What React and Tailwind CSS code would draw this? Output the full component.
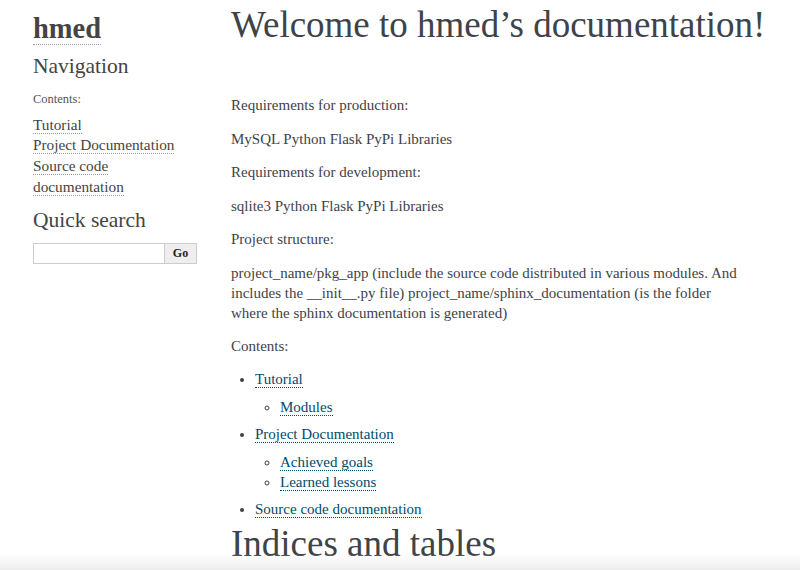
export default function App() {
  const serif = { fontFamily: '"Liberation Serif", Georgia, serif' };

  const SideLink = ({ children }) => (
    <a href="#" className="text-[#444] border-b border-dotted border-[#999] no-underline">
      {children}
    </a>
  );

  const Link = ({ children }) => (
    <a href="#" className="text-[#004b6b] border-b border-dotted border-[#004b6b] no-underline">
      {children}
    </a>
  );

  return (
    <div className="relative h-[570px] overflow-hidden bg-white text-[#3e4349]" style={serif}>
      <div className="flex">
        {/* sidebar */}
        <div className="w-[231px] shrink-0 pl-[33px] pt-[14px]">
          <h1 className="text-[28.5px] font-bold leading-[30px]">
            <a href="#" className="text-[#444] border-b border-dotted border-[#999]">hmed</a>
          </h1>
          <h3 className="text-[21.5px] leading-[26px] mt-[9px] text-[#444]">Navigation</h3>
          <p className="text-[12.5px] text-[#555] mt-[11px]">Contents:</p>
          <ul className="mt-[6px] w-[160px] text-[15.3px] leading-[20.7px]">
            <li><SideLink>Tutorial</SideLink></li>
            <li><SideLink>Project Documentation</SideLink></li>
            <li><SideLink>Source code documentation</SideLink></li>
          </ul>
          <h3 className="text-[21.5px] leading-[26px] mt-[9px] text-[#444]">Quick search</h3>
          <form className="flex mt-[10px]">
            <input type="text" className="w-[132px] h-[21px] border border-[#ccc] outline-none" />
            <button type="button" className="w-[32px] h-[21px] border border-l-0 border-[#ccc] bg-[#eee] text-[12px] font-bold text-[#222]">
              Go
            </button>
          </form>
        </div>

        {/* main */}
        <div className="w-[569px] shrink-0 pt-[3px]">
          <h1 className="text-[37px] leading-[44px] whitespace-nowrap">Welcome to hmed’s documentation!</h1>
          <div className="text-[15px] leading-[20px]">
            <p className="mt-[48px]">Requirements for production:</p>
            <p className="mt-[13.5px]">MySQL Python Flask PyPi Libraries</p>
            <p className="mt-[13.5px]">Requirements for development:</p>
            <p className="mt-[13.5px]">sqlite3 Python Flask PyPi Libraries</p>
            <p className="mt-[13.5px]">Project structure:</p>
            <p className="mt-[13.5px] w-[512px]">
              project_name/pkg_app (include the source code distributed in various modules. And includes the __init__.py file) project_name/sphinx_documentation (is the folder where the sphinx documentation is generated)
            </p>
            <p className="mt-[13.5px]">Contents:</p>
            <ul className="mt-[13px] pl-[24px] list-disc">
              <li>
                <Link>Tutorial</Link>
                <ul className="mt-[8px] mb-[7px] pl-[25px] list-[circle]">
                  <li><Link>Modules</Link></li>
                </ul>
              </li>
              <li>
                <Link>Project Documentation</Link>
                <ul className="mt-[8px] mb-[7px] pl-[25px] list-[circle]">
                  <li><Link>Achieved goals</Link></li>
                  <li><Link>Learned lessons</Link></li>
                </ul>
              </li>
              <li><Link>Source code documentation</Link></li>
            </ul>
          </div>
          <h1 className="text-[37px] leading-[44px] mt-[3px]">Indices and tables</h1>
        </div>
      </div>
      <div className="absolute left-0 right-0 bottom-0 h-[16px] bg-gradient-to-b from-white/0 to-[#ececec]" />
    </div>
  );
}
